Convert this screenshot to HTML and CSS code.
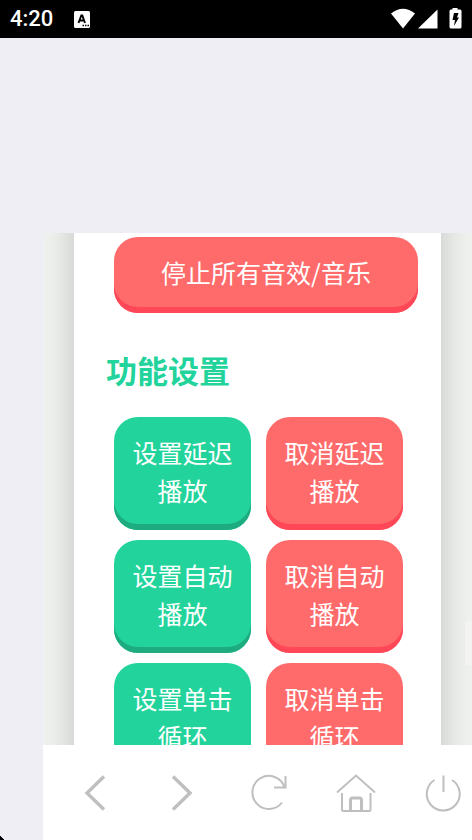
FILE: index.html
```html
<!DOCTYPE html>
<html lang="zh-CN">
  <head>
    <meta charset="UTF-8" />
    <meta name="viewport" content="width=device-width, initial-scale=1.0" />
    <title>功能设置</title>
    <link rel="stylesheet" href="styles.css">
  </head>
  <body>
    <header class="status-bar">
      <span class="clock">4:20</span>
      <svg class="app-icon" width="16" height="18" viewBox="0 0 16 18">
        <rect x="0" y="1" width="16" height="17" rx="1.5" fill="#fff" />
        <path d="M4.500 13 L7.300 5.500 H8.300 L11 13 M5.500 10.500 H10" fill="none" stroke="#000" stroke-width="1.900" />
        <path d="M8.500 15.500 h1.500 M11 15.500 h1.500 M13.500 15.500 h1.500" stroke="#000" stroke-width="1.500" />
      </svg>
      <svg class="signals" width="72" height="22" viewBox="0 0 72 22" fill="#fff">
        <path d="M1 5.5 Q13 -4 25 5.5 L13 20.5 Z" />
        <path d="M47.500 1.500 V20.500 H28 Z" />
        <path d="M62.500 1.500 V0 h5 V1.500 h2.500 q1.500 0 1.500 1.500 V19 q0 1.500 -1.500 1.500 h-9 q-1.500 0 -1.500 -1.500 V3 q0 -1.500 1.500 -1.500 Z" />
        <path d="M64 5 L68.500 5 L67 9.500 H69 L64 18 L65 12 H62.500 Z" fill="#000" />
      </svg>
    </header>
    <main class="screen">
      <div class="webview">
        <div class="card">
          <button class="btn btn-red btn-wide" type="button">停止所有音效/音乐</button>
          <h2 class="title">功能设置</h2>
          <div class="options">
            <button class="btn btn-green" type="button">设置延迟播放</button>
            <button class="btn btn-red" type="button">取消延迟播放</button>
            <button class="btn btn-green" type="button">设置自动播放</button>
            <button class="btn btn-red" type="button">取消自动播放</button>
            <button class="btn btn-green" type="button">设置单击循环</button>
            <button class="btn btn-red" type="button">取消单击循环</button>
          </div>
        </div>
        <span class="side-tab"></span>
      </div>
    </main>
    <nav class="toolbar">
      <button class="tool" type="button" aria-label="后退">
        <svg width="40" height="40" viewBox="0 0 40 40"><path d="M29 3.500 L12 20 L29 36.500" stroke-width="3.400" /></svg>
      </button>
      <button class="tool" type="button" aria-label="前进">
        <svg width="40" height="40" viewBox="0 0 40 40"><path d="M11 3.500 L28 20 L11 36.500" stroke-width="3.400" /></svg>
      </button>
      <button class="tool" type="button" aria-label="刷新">
        <svg width="40" height="40" viewBox="0 0 40 40">
          <path d="M33 29.500 A16.500 16.500 0 1 1 35.500 14" />
          <path d="M36.500 3 V14.500 H25" />
        </svg>
      </button>
      <button class="tool" type="button" aria-label="主页">
        <svg width="40" height="40" viewBox="0 0 40 40">
          <path d="M1 19.500 L20 2.500 L39 19.500" />
          <path d="M6 20 V36.500 Q6 38 7.500 38 H33 Q34.500 38 34.500 36.500 V20" />
          <path d="M14.500 38 V27 Q14.500 25 16.500 25 H23.500 Q25.500 25 25.500 27 V38" stroke-width="3" />
        </svg>
      </button>
      <button class="tool" type="button" aria-label="退出">
        <svg width="40" height="40" viewBox="0 0 40 40">
          <path d="M11.500 7 A16.500 16.500 0 1 0 29 7" />
          <path d="M20.500 2.500 V19" />
        </svg>
      </button>
    </nav>
    <span class="corner"></span>
  </body>
</html>
```

FILE: styles.css
```css
* {
  box-sizing: border-box;
}
body {
  margin: 0;
  height: 100vh;
  display: flex;
  flex-direction: column;
  overflow: hidden;
  background: #efeef4;
  font-family: "Noto Sans CJK SC", sans-serif;
}
button {
  border: 0;
  font-family: inherit;
}

/* status bar */
.status-bar {
  flex: none;
  height: 38px;
  padding: 0 10px;
  display: flex;
  align-items: center;
  background: #000;
  color: #fff;
}
.clock {
  font: 500 22px/38px Roboto, sans-serif;
}
.app-icon {
  margin-left: 21px;
}
.signals {
  margin-left: auto;
}

/* page */
.screen {
  flex: 1;
  min-height: 0;
  padding: 195px 0 0 43px;
}
.webview {
  position: relative;
  height: 100%;
  overflow: hidden;
  padding: 0 31px;
  background: #f0f2ef;
}
/* starts above the visible area, as the page is scrolled */
.card {
  margin-top: -40px;
  padding: 44px 23px 40px 40px;
  background: #fff;
  box-shadow: 0 0 32px rgba(0, 0, 0, 0.2);
}
.side-tab {
  position: absolute;
  right: 0;
  top: 389px;
  width: 7px;
  height: 43px;
  background: #f3f4f2;
}
.title {
  margin: 34px 0 24px -8px;
  font-size: 31px;
  line-height: 46px;
  font-weight: bold;
  color: #22d49b;
}
.options {
  display: grid;
  grid-template-columns: 1fr 1fr;
  gap: 10px 15px;
  padding-right: 15px;
}
.btn {
  padding: 16px 15px 21px;
  border-radius: 24px;
  font-size: 25px;
  line-height: 38px;
  color: #fff;
}
.btn-wide {
  display: block;
  width: 100%;
  padding-bottom: 22px;
}
.btn-green {
  background: #22d49b;
  box-shadow: inset 0 -6px #1eab80;
}
.btn-red {
  background: #ff6b6b;
  box-shadow: inset 0 -6px #ff4757;
}

/* browser toolbar */
.toolbar {
  flex: none;
  height: 95px;
  margin-left: 43px;
  padding-left: 8px;
  display: flex;
  align-items: center;
  overflow: hidden;
  background: #fff;
}
.tool {
  flex: none;
  width: 87px;
  height: 95px;
  padding: 0;
  display: flex;
  align-items: center;
  justify-content: center;
  background: none;
}
.tool svg {
  fill: none;
  stroke: #bfbfbf;
  stroke-width: 2;
}
.corner {
  position: absolute;
  left: 0;
  bottom: 0;
  width: 4px;
  height: 4px;
  background: linear-gradient(45deg, #000 50%, transparent 50%);
}
```
